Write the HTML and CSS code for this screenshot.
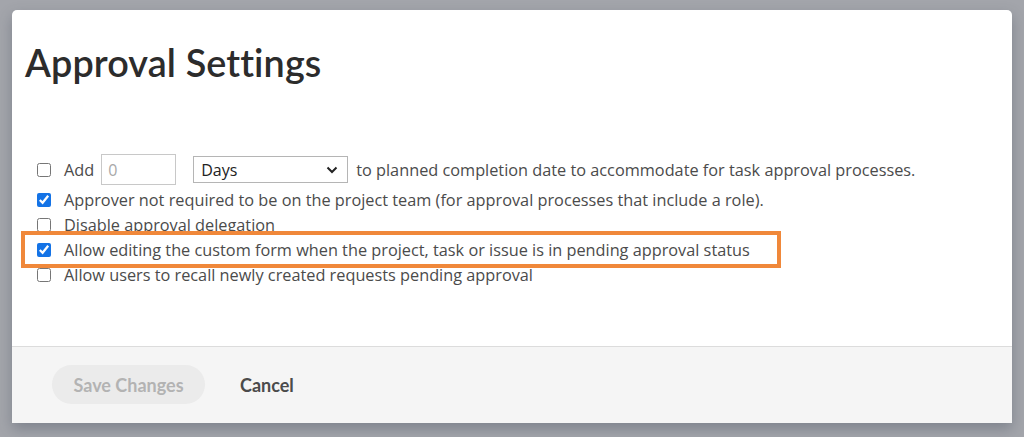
FILE: index.html
```html
<!DOCTYPE html>
<html>
<head>
<meta charset="utf-8">
<link rel="stylesheet" href="styles.css">
</head>
<body>
<div class="dialog">
  <div class="content">
    <h1 class="title">Approval Settings</h1>
    <div class="options">
      <div class="row row-first">
        <input type="checkbox" class="cb">
        <span class="label">Add</span>
        <input type="text" class="num" placeholder="0">
        <div class="select"><span>Days</span>
          <svg class="chev" width="12" height="8" viewBox="0 0 12 8"><path d="M1.5 1.5 L6 6 L10.5 1.5" fill="none" stroke="#222" stroke-width="2"/></svg>
        </div>
        <span class="label">to planned completion date to accommodate for task approval processes.</span>
      </div>
      <div class="row">
        <input type="checkbox" class="cb" checked>
        <span class="label">Approver not required to be on the project team (for approval processes that include a role).</span>
      </div>
      <div class="row">
        <input type="checkbox" class="cb">
        <span class="label">Disable approval delegation</span>
      </div>
      <div class="row">
        <input type="checkbox" class="cb" checked>
        <span class="label">Allow editing the custom form when the project, task or issue is in pending approval status</span>
        <div class="highlight"></div>
      </div>
      <div class="row">
        <input type="checkbox" class="cb">
        <span class="label">Allow users to recall newly created requests pending approval</span>
      </div>
    </div>
  </div>
  <div class="footer">
    <button class="btn-save">Save Changes</button>
    <button class="btn-cancel">Cancel</button>
  </div>
</div>
</body>
</html>
```

FILE: styles.css
```css
html, body {
  margin: 0;
  padding: 0;
}
body {
  background: #a3a5ab;
  height: 437px;
  overflow: hidden;
  padding-top: 10px;
  padding-left: 12px;
  box-sizing: border-box;
}
.dialog {
  width: 1000px;
  background: #fff;
  border-radius: 5px 5px 0 0;
  box-shadow: 0 6px 14px rgba(60, 70, 85, 0.35);
}
.content {
  height: 336px;
  padding-left: 13px;
  box-sizing: border-box;
  padding-top: 33px;
}
.title {
  margin: 0;
  font-family: "Lato", sans-serif;
  font-weight: 600;
  font-size: 37.8px;
  line-height: 40px;
  color: #2c2c2c;
  letter-spacing: 0.1px;
}
.options {
  margin-top: 71px;
  margin-left: 12px;
  font-family: "Open Sans", sans-serif;
  font-size: 16.3px;
  color: #4b4b4b;
}
.row {
  position: relative;
  display: flex;
  align-items: center;
  height: 25px;
}
.row-first {
  height: 31px;
  margin-bottom: 2px;
}
.cb {
  width: 14px;
  height: 14px;
  margin: 0 13px 0 0;
  accent-color: #1473e6;
}
.label {
  white-space: nowrap;
}
.num {
  width: 75px;
  height: 31px;
  box-sizing: border-box;
  border: 1px solid #c8c8c8;
  margin: 0 17px 0 7px;
  padding: 0 6px;
  font-family: "Open Sans", sans-serif;
  font-size: 16px;
  color: #4b4b4b;
}
.num::placeholder {
  color: #a8a8a8;
}
.select {
  width: 155px;
  height: 27px;
  box-sizing: border-box;
  border: 1px solid #b5b5b5;
  display: flex;
  align-items: center;
  justify-content: space-between;
  padding: 0 9px 0 7px;
  margin-right: 8px;
  color: #222;
  font-size: 16px;
}
.highlight {
  position: absolute;
  left: -16px;
  width: 760px;
  height: 37px;
  top: -6px;
  box-sizing: border-box;
  border: 4px solid #f0883a;
  pointer-events: none;
}
.footer {
  height: 77px;
  background: #f5f5f5;
  border-top: 1px solid #dcdcdc;
  box-sizing: border-box;
  display: flex;
  align-items: center;
  padding-left: 40px;
  padding-bottom: 1px;
}
.btn-save {
  width: 153px;
  height: 39px;
  border: none;
  border-radius: 20px;
  background: #ebebeb;
  color: #b3b3b3;
  font-family: "Lato", sans-serif;
  font-weight: 700;
  font-size: 18px;
  padding: 0;
  margin-right: 35px;
}
.btn-cancel {
  border: none;
  background: none;
  padding: 0;
  font-family: "Lato", sans-serif;
  font-weight: 700;
  font-size: 18px;
  color: #4b4b4b;
}
```
